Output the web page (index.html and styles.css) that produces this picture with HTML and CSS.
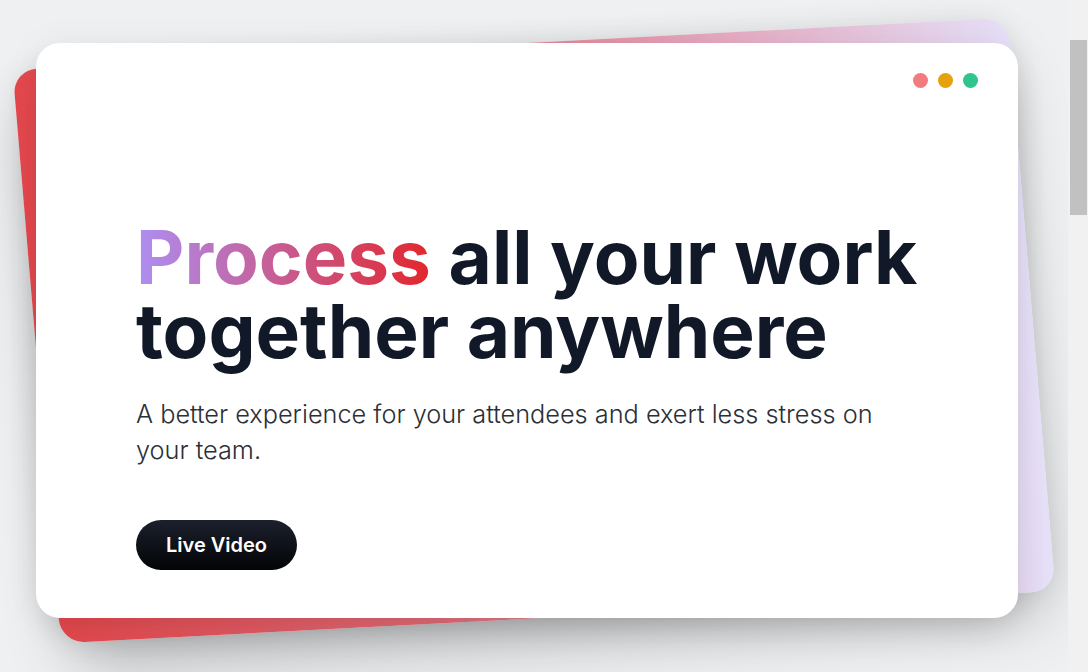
FILE: index.html
```html
<!DOCTYPE html>
<html lang="en">
<head>
<meta charset="utf-8">
<title>Process all your work together anywhere</title>
<link rel="stylesheet" href="styles.css">
</head>
<body>
<main class="page">
  <section class="hero">
    <div class="stack">
      <div class="back-card"></div>
      <article class="card">
        <div class="dots">
          <span class="dot dot-red"></span>
          <span class="dot dot-amber"></span>
          <span class="dot dot-green"></span>
        </div>
        <div class="content">
          <h1 class="title"><span class="accent">Process</span> all your work together anywhere</h1>
          <p class="lead">A better experience for your attendees and exert less stress on your team.</p>
          <a class="btn" href="#">Live Video</a>
        </div>
      </article>
    </div>
  </section>
</main>
<div class="scrollbar" aria-hidden="true"><div class="scrollbar-thumb"></div></div>
</body>
</html>
```

FILE: styles.css
```css
html, body {
  height: 100%;
}
body {
  margin: 0;
  background: #eef0f2;
  font-family: Inter, "Noto Sans", sans-serif;
  overflow: hidden;
}
.page {
  height: 100%;
  margin-right: 20px;
}
.hero {
  padding: 43px 0 0 36px;
}
.stack {
  position: relative;
  width: 982px;
  height: 575px;
}
.back-card {
  position: absolute;
  top: 0;
  bottom: 0;
  left: -7px;
  right: -7px;
  border-radius: 24px;
  background: linear-gradient(to right, #e4484d 0%, #e06a76 38%, #e6a8bf 70%, #e5e0f8 100%);
  transform: translateX(7px) rotate(-3deg) skewX(1.8deg);
  box-shadow: 0 33px 66px -16px rgba(0, 0, 0, 0.3), 0 0 30px rgba(0, 0, 0, 0.07);
}
.card {
  position: relative;
  box-sizing: border-box;
  height: 100%;
  display: flex;
  flex-direction: column;
  padding: 30px 40px 48px 100px;
  background: #ffffff;
  border-radius: 24px;
  box-shadow: 0 16px 40px -12px rgba(0, 0, 0, 0.12), 0 0 36px rgba(0, 0, 0, 0.05);
}
.dots {
  align-self: flex-end;
  display: flex;
  gap: 10px;
}
.dot {
  width: 15px;
  height: 15px;
  border-radius: 50%;
}
.dot-red { background: #f27b80; }
.dot-amber { background: #e6a10f; }
.dot-green { background: #2ec68d; }
.content {
  margin-top: auto;
  display: flex;
  flex-direction: column;
  align-items: flex-start;
}
.title {
  margin: 0;
  font-size: 74.7px;
  line-height: 1;
  font-weight: 700;
  color: #111827;
  letter-spacing: 0;
}
.accent {
  background: linear-gradient(to right, #ad8ff3, #e3262c);
  -webkit-background-clip: text;
  background-clip: text;
  color: transparent;
}
.lead {
  margin: 27px 0 0;
  max-width: 768px;
  font-size: 25.3px;
  line-height: 36px;
  font-weight: 300;
  color: #2b2f36;
}
.btn {
  margin-top: 52px;
  display: inline-flex;
  align-items: center;
  height: 50px;
  padding: 0 30px;
  border-radius: 999px;
  background: linear-gradient(to bottom, #1b202c, #030406);
  color: #ffffff;
  font-size: 20px;
  font-weight: 600;
  text-decoration: none;
}
.scrollbar {
  position: fixed;
  top: 0;
  right: 0;
  bottom: 0;
  width: 20px;
  background: #f1f1f1;
}
.scrollbar-thumb {
  margin: 40px 1px 0 2px;
  height: 175px;
  background: #c1c1c1;
}
```
